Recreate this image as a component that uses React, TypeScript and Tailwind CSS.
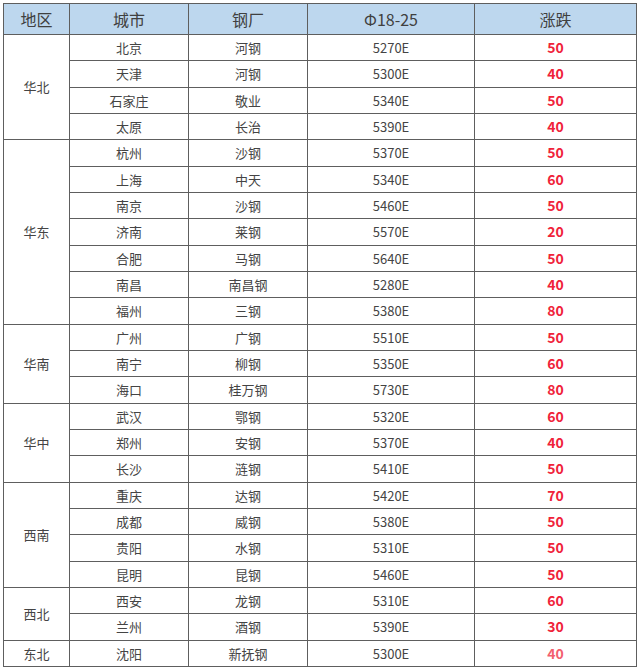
import React from "react";

type Row = { city: string; mill: string; price: string; chg: string };
type Group = { region: string; rows: Row[] };

const data: Group[] = [
  { region: "华北", rows: [
    { city: "北京", mill: "河钢", price: "5270E", chg: "50" },
    { city: "天津", mill: "河钢", price: "5300E", chg: "40" },
    { city: "石家庄", mill: "敬业", price: "5340E", chg: "50" },
    { city: "太原", mill: "长治", price: "5390E", chg: "40" },
  ]},
  { region: "华东", rows: [
    { city: "杭州", mill: "沙钢", price: "5370E", chg: "50" },
    { city: "上海", mill: "中天", price: "5340E", chg: "60" },
    { city: "南京", mill: "沙钢", price: "5460E", chg: "50" },
    { city: "济南", mill: "莱钢", price: "5570E", chg: "20" },
    { city: "合肥", mill: "马钢", price: "5640E", chg: "50" },
    { city: "南昌", mill: "南昌钢", price: "5280E", chg: "40" },
    { city: "福州", mill: "三钢", price: "5380E", chg: "80" },
  ]},
  { region: "华南", rows: [
    { city: "广州", mill: "广钢", price: "5510E", chg: "50" },
    { city: "南宁", mill: "柳钢", price: "5350E", chg: "60" },
    { city: "海口", mill: "桂万钢", price: "5730E", chg: "80" },
  ]},
  { region: "华中", rows: [
    { city: "武汉", mill: "鄂钢", price: "5320E", chg: "60" },
    { city: "郑州", mill: "安钢", price: "5370E", chg: "40" },
    { city: "长沙", mill: "涟钢", price: "5410E", chg: "50" },
  ]},
  { region: "西南", rows: [
    { city: "重庆", mill: "达钢", price: "5420E", chg: "70" },
    { city: "成都", mill: "威钢", price: "5380E", chg: "50" },
    { city: "贵阳", mill: "水钢", price: "5310E", chg: "50" },
    { city: "昆明", mill: "昆钢", price: "5460E", chg: "50" },
  ]},
  { region: "西北", rows: [
    { city: "西安", mill: "龙钢", price: "5310E", chg: "60" },
    { city: "兰州", mill: "酒钢", price: "5390E", chg: "30" },
  ]},
  { region: "东北", rows: [
    { city: "沈阳", mill: "新抚钢", price: "5300E", chg: "40" },
  ]},
];

const spanClass: Record<number, string> = {
  1: "row-span-1",
  2: "row-span-2",
  3: "row-span-3",
  4: "row-span-4",
  7: "row-span-7",
};

const font = { fontFamily: '"Microsoft YaHei", "Noto Sans CJK SC", "Noto Sans", sans-serif' };

export default function App() {
  const cell = "bg-white flex items-center justify-center text-[13px] text-[#444]";
  return (
    <div className="w-[640px] h-[672px] bg-white pt-[3px] pl-[3px]" style={font}>
      <div className="grid w-[634px] h-[664px] bg-[#5e5e5e] p-px gap-px grid-cols-[65px_118px_118px_166px_161px] grid-rows-[30px_repeat(24,minmax(0,1fr))]">
        {["地区", "城市", "钢厂", "Φ18-25", "涨跌"].map((h) => (
          <div key={h} className="bg-[#bdd7ee] flex items-center justify-center text-[16px] text-[#404040]">
            {h}
          </div>
        ))}
        {data.map((g, gi) => (
          <React.Fragment key={g.region}>
            <div className={`${cell} col-start-1 ${spanClass[g.rows.length]}`}>{g.region}</div>
            {g.rows.map((r, ri) => {
              const last = gi === data.length - 1;
              return (
                <React.Fragment key={r.city + ri}>
                  <div className={cell}>{r.city}</div>
                  <div className={cell}>{r.mill}</div>
                  <div className={cell}>{r.price}</div>
                  <div className={`bg-white flex items-center justify-center text-[14px] font-bold ${last ? "text-[#f3606e]" : "text-[#f0233a]"}`}>
                    {r.chg}
                  </div>
                </React.Fragment>
              );
            })}
          </React.Fragment>
        ))}
      </div>
    </div>
  );
}
